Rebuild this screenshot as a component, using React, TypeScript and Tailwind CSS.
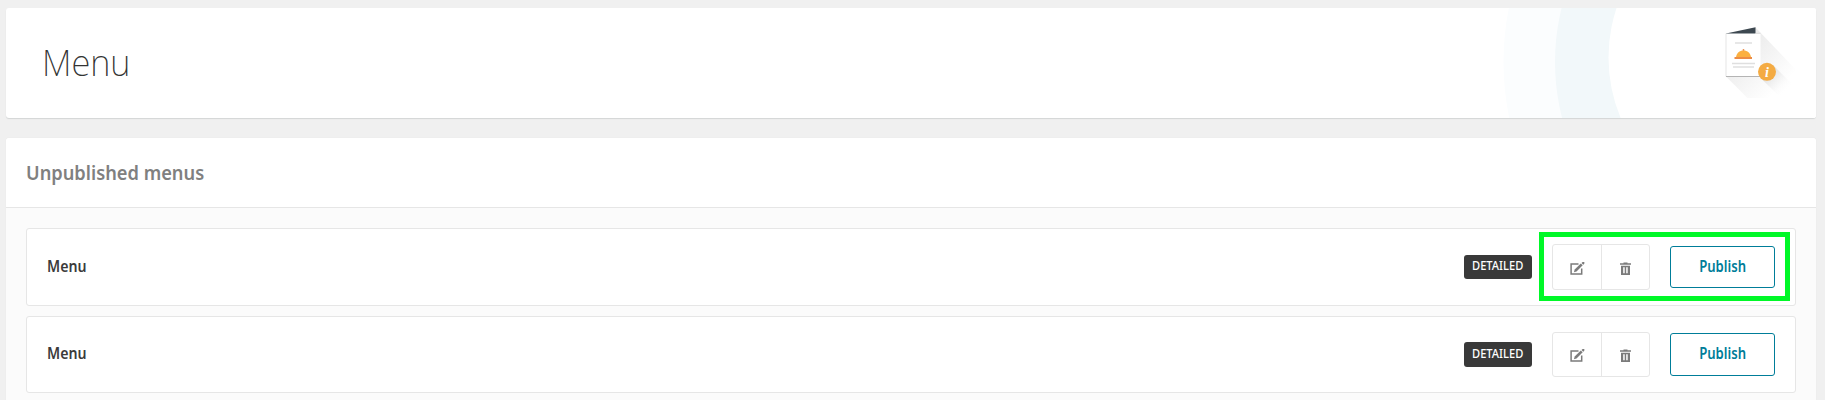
function EditIcon() {
  return (
    <svg width="15" height="14" viewBox="0 0 15 14" fill="none">
      <path d="M8.5 2.1H1.1V12.1H11.7V6.5" stroke="#7b7b7b" strokeWidth="1.5" />
      <path d="M3.9 10.2 4.7 7.6 10.8 1.5 12.7 3.3 6.5 9.4Z" fill="#7b7b7b" />
      <path d="M11.5 1.1 12.6 0 14.4 0 14.3 1.7 13.3 2.7Z" fill="#7b7b7b" />
    </svg>
  );
}

function TrashIcon() {
  return (
    <svg width="12" height="14" viewBox="0 0 12 14">
      <path d="M3.5 0.5H7.5V1.2H11V2.8H0V1.2H3.5Z" fill="#7b7b7b" />
      <path fillRule="evenodd" d="M1 3.8H10V13H1ZM3.2 5.3V11.2H4.7V5.3ZM6.2 5.3V11.2H7.7V5.3Z" fill="#7b7b7b" />
    </svg>
  );
}

function MenuArt() {
  return (
    <svg className="absolute right-0 top-0" width="330" height="110" viewBox="1486 8 330 110">
      <defs>
        <linearGradient id="long" gradientUnits="userSpaceOnUse" x1="1743" y1="50" x2="1780" y2="87">
          <stop offset="0" stopColor="#ececec" />
          <stop offset="1" stopColor="#ffffff" />
        </linearGradient>
        <linearGradient id="short" gradientUnits="userSpaceOnUse" x1="1767" y1="72" x2="1787" y2="92">
          <stop offset="0" stopColor="#dcdcdc" />
          <stop offset="1" stopColor="#ffffff" stopOpacity="0" />
        </linearGradient>
      </defs>
      <circle cx="1778.5" cy="62" r="275" fill="#fbfdfe" />
      <circle cx="1779" cy="62" r="224" fill="#f2f8fa" />
      <circle cx="1764.5" cy="57.5" r="156" fill="#ffffff" />
      <rect x="1700" y="8" width="116" height="110" fill="#ffffff" />
      <path d="M1726 76.500 1747.500 98H1785L1800 74 1755.500 27.500Z" fill="url(#long)" />
      <path d="M1773.500 65.500 1796 88 1783 100 1760.500 78Z" fill="url(#short)" />
      <path d="M1726 33.500 1755.500 27.200V34H1726Z" fill="#3d4850" />
      <path d="M1726 33.500H1760.500V76.500H1726Z" fill="#ffffff" />
      <path d="M1726 33.500V76.500" stroke="#dedede" strokeWidth="0.8" />
      <path d="M1755.500 33.400H1760.500" stroke="#d5d5d5" strokeWidth="0.8" />
      <path d="M1726 76.500H1760" stroke="#b4b4b4" strokeWidth="1" />
      <path d="M1735 43H1752M1732 63.500H1755M1733 67H1754" stroke="#dfdfdf" strokeWidth="1.500" />
      <path d="M1736 57.200C1736.500 53 1739.500 50.500 1743.500 50.500S1750.500 53 1751 57.200Z" fill="#fbb040" />
      <circle cx="1743.500" cy="49.900" r="0.900" fill="#e98a45" />
      <path d="M1734.500 57H1752V59H1734.500Z" fill="#ec8c46" />
      <circle cx="1767" cy="71.800" r="9" fill="#f4ab43" />
      <text x="1767" y="76.500" textAnchor="middle" fontFamily="Liberation Serif, serif" fontSize="14" fontWeight="700" fontStyle="italic" fill="#ffffff">i</text>
    </svg>
  );
}

type RowProps = { rowClass: string; titleClass: string; badgeClass: string; groupClass: string; publishClass: string; highlighted?: boolean };

function MenuRow({ rowClass, titleClass, badgeClass, groupClass, publishClass, highlighted }: RowProps) {
  return (
    <div className={`relative flex items-start rounded-[3px] border border-[#e6e6e6] bg-white pl-5 pr-5 ${rowClass}`}>
      <div className={`mr-auto text-[16px] leading-[22px] font-semibold text-[#3b3b3b] ${titleClass}`}>
        <span className="inline-block origin-left scale-x-[.885]">Menu</span>
      </div>
      <span className={`mr-5 flex w-[68px] justify-center rounded-[3px] bg-[#393939] text-[12px] leading-[22px] font-medium text-white ${badgeClass}`}>
        <span className="inline-block scale-x-[.925]">DETAILED</span>
      </span>
      <div className={`mr-5 flex w-[98px] rounded-[3px] border border-[#e6e6e6] bg-white ${groupClass}`}>
        <button className="flex w-[49px] items-center justify-center border-r border-[#e6e6e6] pt-[3px]">
          <EditIcon />
        </button>
        <button className="flex flex-1 items-center justify-center pt-[3px]">
          <TrashIcon />
        </button>
      </div>
      <button className={`flex w-[105px] justify-center rounded-[3px] border border-[#007d99] bg-white pt-2 text-[16px] leading-[22px] font-semibold text-[#007d99] ${publishClass}`}>
        <span className="inline-block scale-x-[.82]">Publish</span>
      </button>
      {highlighted && <div className="absolute right-[5px] top-[3px] h-[69px] w-[251px] border-[5px] border-[#00f828]" />}
    </div>
  );
}

export default function App() {
  return (
    <div className="h-[400px] overflow-hidden bg-[#f0f0f0] pl-1.5 pr-[9px] pt-2 font-['Noto_Sans',sans-serif]">
      <header className="relative h-[110px] overflow-hidden rounded-[3px] bg-white shadow-[0_1px_1px_#d3d5d5]">
        <MenuArt />
        <h1 className="pl-9 pt-[31px] text-[36px] leading-[48px] font-extralight text-[#333333]">
          <span className="inline-block origin-left scale-x-[.96]">Menu</span>
        </h1>
      </header>
      <section className="mt-5 h-[300px] rounded-t-[3px] bg-[#fbfbfb] shadow-[0_0_1px_#dddddd]">
        <h2 className="h-[70px] rounded-t-[3px] border-b border-[#e6e6e6] bg-white pl-5 pt-[21px] text-[20px] leading-[28px] font-semibold text-[#808080]">
          <span className="inline-block origin-left scale-x-[.913]">Unpublished menus</span>
        </h2>
        <div className="flex flex-col gap-2.5 px-5 pt-5">
          <MenuRow highlighted rowClass="h-[78px]" titleClass="pt-[26px]" badgeClass="mt-[26px] h-6" groupClass="mt-[15px] h-[46px]" publishClass="mt-[17px] h-[42px]" />
          <MenuRow rowClass="h-[77px]" titleClass="pt-[25px]" badgeClass="mt-[25px] h-[25px] pt-px" groupClass="mt-[15px] h-[45px]" publishClass="mt-4 h-[43px]" />
        </div>
      </section>
    </div>
  );
}
